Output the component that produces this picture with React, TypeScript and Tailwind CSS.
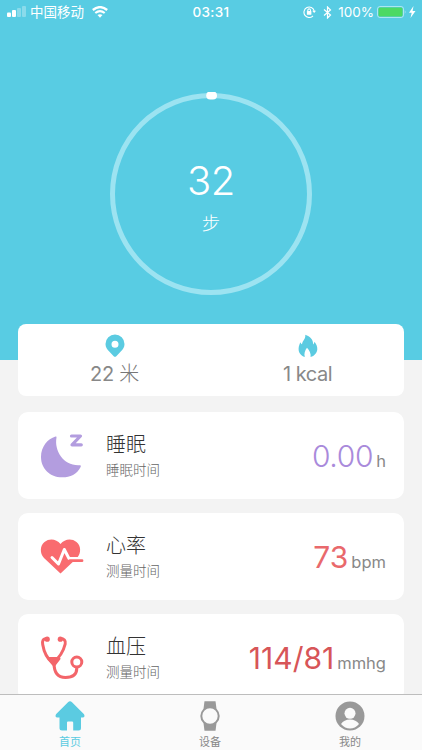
import type { ReactNode } from 'react';

interface Metric {
  title: string;
  subtitle: string;
  value: string;
  unit: string;
  valueClass: string;
  icon: ReactNode;
}

interface Tab {
  label: string;
  active?: boolean;
  icon: ReactNode;
}

function SleepIcon() {
  return (
    <svg width="48" height="48" viewBox="0 0 48 48" fill="#b39ddf">
      <path d="M18.500 5.500C16 19 26 34.500 42 33.200Q43.600 33.200 42.600 35C39 42.500 31.500 45.500 24 45.300C12 45.300 3 36.500 3 25C3 15 9.500 7 17.500 4.600Q18.800 4.300 18.500 5.500Z" />
      <path d="M33.500 4H42.500L34 12.800H43.300" fill="none" stroke="#b39ddf" strokeWidth="3.200" strokeLinecap="round" strokeLinejoin="round" />
    </svg>
  );
}

function HeartIcon() {
  return (
    <svg width="48" height="48" viewBox="0 0 48 48">
      <path d="M22.500 40.500L6 25C1.500 20 2 12.500 6.500 9C11.500 5 18.500 6 22.500 11C26.500 6 33.500 5 38.500 9C43 12.500 43.500 20 39 25Z" fill="#f96b6f" />
      <path d="M14 24.500L20.500 31L26.300 16.500L31 25.500H43.500" fill="none" stroke="#fff" strokeWidth="3" strokeLinecap="round" strokeLinejoin="round" />
      <path d="M32 27.700H44" fill="none" stroke="#f96b6f" strokeWidth="2.800" strokeLinecap="round" />
    </svg>
  );
}

function StethoscopeIcon() {
  return (
    <svg width="48" height="48" viewBox="0 0 48 48" fill="none" stroke="#f3656a" strokeWidth="3" strokeLinecap="round" strokeLinejoin="round">
      <path d="M9 4.500C4.500 4.500 4.200 7.500 4.700 10.500C6 18.500 8.500 24 14.500 29C21.500 24 25.500 17 27.200 10C28 6.500 26 4.500 22.500 4.500" />
      <path d="M16 29C16 39 20 43.500 27.500 43.500C35.500 43.500 38.800 40 38.800 34" />
      <circle cx="9.200" cy="5.200" r="2.600" fill="#f3656a" stroke="none" />
      <circle cx="22.300" cy="5.200" r="2.600" fill="#f3656a" stroke="none" />
      <path d="M11 24.500H21L16 31Z" fill="#f3656a" />
      <circle cx="38.800" cy="28" r="5" />
    </svg>
  );
}

function StatusBar() {
  return (
    <div className="flex h-6 items-center justify-between text-[13px] leading-6">
      <div className="flex w-[141px] items-center pl-[7px]">
        <svg width="20" height="12" viewBox="0 0 20 12" fill="#fff" className="shrink-0">
          <rect x="0" y="6.500" width="4" height="4.500" rx="1" />
          <rect x="5" y="4" width="4" height="7" rx="1" />
          <rect x="10" y="2" width="4" height="9" rx="1" opacity=".3" />
          <rect x="15" y="0" width="4" height="11" rx="1" opacity=".3" />
        </svg>
        <span className="ml-[3px] text-[13.500px]">中国移动</span>
        <svg width="16" height="12" viewBox="0 0 16 12" fill="none" stroke="#fff" className="ml-2 shrink-0">
          <path d="M.8 4Q8 -1.800 15.200 4" strokeWidth="2.300" />
          <path d="M3.300 7Q8 3.200 12.700 7" strokeWidth="2.200" />
          <path d="M8 11.800L5.500 9.100Q8 7.300 10.500 9.100Z" fill="#fff" stroke="none" />
        </svg>
      </div>
      <span className="text-[13.500px] font-medium tracking-[0.300px]">03:31</span>
      <div className="flex w-[141px] items-center justify-end pr-1.5">
        <svg width="13" height="12" viewBox="0 0 13 12" fill="none" stroke="#fff" strokeWidth="1.100">
          <path d="M10 9.800A5.200 5.200 0 1 1 11.200 5" />
          <path d="M9.200 4.700H13L11.200 7Z" fill="#fff" stroke="none" />
          <rect x="3.900" y="5" width="4.500" height="3.800" rx=".5" fill="#fff" stroke="none" />
          <path d="M4.800 5V4.200a1.350 1.350 0 0 1 2.700 0V5" />
        </svg>
        <svg width="9" height="13" viewBox="0 0 9 13" fill="none" stroke="#fff" strokeWidth="1.200" className="ml-[7px]">
          <path d="M1 3.500L7.500 9L4.500 12V1L7.500 4L1 9.500" />
        </svg>
        <span className="ml-[6px] text-[13.500px]">100%</span>
        <svg width="39" height="12" viewBox="0 0 39 12" className="ml-[3px] shrink-0">
          <rect x=".5" y=".5" width="26" height="11" rx="2.500" fill="none" stroke="#fff" opacity=".5" />
          <rect x="1.500" y="1.500" width="24" height="9" rx="1.500" fill="#4cd964" />
          <path d="M27.800 4Q29.300 6 27.800 8Z" fill="#fff" opacity=".6" />
          <path d="M36.500 0L32 6.700H34.700L33.500 12L38.500 5H35.600Z" fill="#fff" />
        </svg>
      </div>
    </div>
  );
}

function StepRing() {
  return (
    <div className="mx-auto mt-[68px] grid h-[204px] w-[204px] place-items-center">
      <svg width="204" height="204" viewBox="0 0 204 204" className="col-start-1 row-start-1">
        <circle cx="102" cy="102" r="98.500" fill="none" stroke="#9ce3f1" strokeWidth="5" />
        <path d="M101.200 3.500H104" stroke="#fff" strokeWidth="8" strokeLinecap="round" />
      </svg>
      <div className="col-start-1 row-start-1 flex flex-col items-center pt-[7px]">
        <span className="text-[40px] leading-[46px] font-light tracking-[-0.500px]">32</span>
        <span className="mt-[5px] text-[18.500px] leading-7 font-light">步</span>
      </div>
    </div>
  );
}

function SummaryCard() {
  return (
    <div className="grid h-[72px] shrink-0 grid-cols-2 rounded-lg bg-white text-[#888]">
      <div className="flex flex-col items-center pt-2.5">
        <svg width="20" height="24" viewBox="0 0 20 24">
          <path fillRule="evenodd" d="M10 .5A9.500 9.500 0 0 0 .5 10C.5 13.200 2 15.200 4 17.200L8.700 22.200Q10 23.500 11.300 22.200L16 17.200C18 15.200 19.500 13.200 19.500 10A9.500 9.500 0 0 0 10 .5ZM10 6.700A3.500 3.500 0 1 1 10 13.700A3.500 3.500 0 0 1 10 6.700Z" fill="#5bcbe1" />
        </svg>
        <span className="mt-1 text-[20px] leading-6 tracking-[-0.300px]">
          22 <span className="font-light text-[#777]">米</span>
        </span>
      </div>
      <div className="flex flex-col items-center pt-2.5">
        <svg width="20" height="24" viewBox="0 0 20 24" fill="#5bcbe1">
          <path d="M7.300 .8C12 2.200 15.600 6 15 10.500C15.800 10 16.300 9 16.500 7.800C18.200 10 19.500 12.500 19.300 15.300C19.200 18.800 16.300 22.200 12.600 23C13.200 19.500 11.300 16.500 9 13.800C7 16.500 5.800 19.700 6.800 23C2.700 21.500 .5 18.700 .6 14.700C.7 12 1.600 9.900 2.500 8.200C2.800 9.300 3.300 9.800 4 10.200C4.500 6.700 7.800 5 7.300 .8Z" />
        </svg>
        <span className="mt-1 text-[20px] leading-6 tracking-[-0.500px]">1 kcal</span>
      </div>
    </div>
  );
}

function MetricCard({ metric }: { metric: Metric }) {
  return (
    <div className="flex h-[87px] shrink-0 items-center rounded-[10px] bg-white pr-[18px] pl-5">
      {metric.icon}
      <div className="ml-5 flex flex-col pt-px">
        <span className="text-[20px] leading-7 font-light text-[#333]">{metric.title}</span>
        <span className="text-[13.500px] leading-[23px] font-light text-[#666]">{metric.subtitle}</span>
      </div>
      <div className="ml-auto flex items-baseline pt-px">
        <span className={metric.valueClass}>{metric.value}</span>
        <span className="ml-[3px] text-[16.500px] text-[#888]">{metric.unit}</span>
      </div>
    </div>
  );
}

const metrics: Metric[] = [
  {
    title: '睡眠',
    subtitle: '睡眠时间',
    value: '0.00',
    unit: 'h',
    valueClass: 'text-[30px] font-light tracking-[-0.300px] text-[#a98adb]',
    icon: <SleepIcon />,
  },
  {
    title: '心率',
    subtitle: '测量时间',
    value: '73',
    unit: 'bpm',
    valueClass: 'text-[30px] text-[#e9696c]',
    icon: <HeartIcon />,
  },
  {
    title: '血压',
    subtitle: '测量时间',
    value: '114/81',
    unit: 'mmhg',
    valueClass: 'text-[30px] text-[#d75558]',
    icon: <StethoscopeIcon />,
  },
];

const tabs: Tab[] = [
  {
    label: '首页',
    active: true,
    icon: (
      <svg width="30" height="30" viewBox="0 0 30 30" fill="#5bcbe1">
        <path d="M13 1.200Q15 -.5 17 1.200L28.800 13Q30.500 16 28 16.500H26V27Q26 29.500 23.500 29.500H18.200V21.500Q18.200 20.500 17 20.500H13Q12 20.500 12 21.500V29.500H7Q4.500 29.500 4.500 27V16.500H2Q-.5 16 1.200 13Z" />
      </svg>
    ),
  },
  {
    label: '设备',
    icon: (
      <svg width="30" height="30" viewBox="0 0 30 30">
        <path d="M9.500 .3H20.500L21.500 8V22L20.500 29.700H9.500L8.500 22V8Z" fill="#999" />
        <circle cx="15" cy="15" r="8.700" fill="#fafafa" stroke="#999" strokeWidth="2" />
      </svg>
    ),
  },
  {
    label: '我的',
    icon: (
      <svg width="30" height="30" viewBox="0 0 30 30">
        <circle cx="15" cy="15" r="14.500" fill="#999" />
        <circle cx="15" cy="12.300" r="5.500" fill="#fafafa" />
        <path d="M6 23Q9 18.500 15 18.500T24 23Q20 27.500 15 27.500T6 23Z" fill="#fafafa" />
      </svg>
    ),
  },
];

export default function App() {
  return (
    <div className="flex h-[750px] w-[422px] flex-col overflow-hidden bg-[#f3f3f3] font-['Inter','Noto_Sans_CJK_SC',sans-serif]">
      <header className="h-[360px] shrink-0 bg-[#58cce3] text-white">
        <StatusBar />
        <StepRing />
      </header>

      <main className="-mt-9 flex min-h-0 flex-1 flex-col px-[18px]">
        <SummaryCard />
        <div className="mt-4 flex min-h-0 flex-1 flex-col gap-[14px] overflow-hidden">
          {metrics.map((metric) => (
            <MetricCard key={metric.title} metric={metric} />
          ))}
        </div>
      </main>

      <nav className="grid h-14 shrink-0 grid-cols-3 border-t border-[#bdbdbd] bg-[#fafafa] pr-0.5">
        {tabs.map((tab) => (
          <div key={tab.label} className="flex flex-col items-center pt-1.5">
            {tab.icon}
            <span className={tab.active ? 'mt-0.5 text-[11px] leading-[18px] text-[#5bcbe1]' : 'mt-0.5 text-[11px] leading-[18px] text-[#888]'}>
              {tab.label}
            </span>
          </div>
        ))}
      </nav>
    </div>
  );
}
